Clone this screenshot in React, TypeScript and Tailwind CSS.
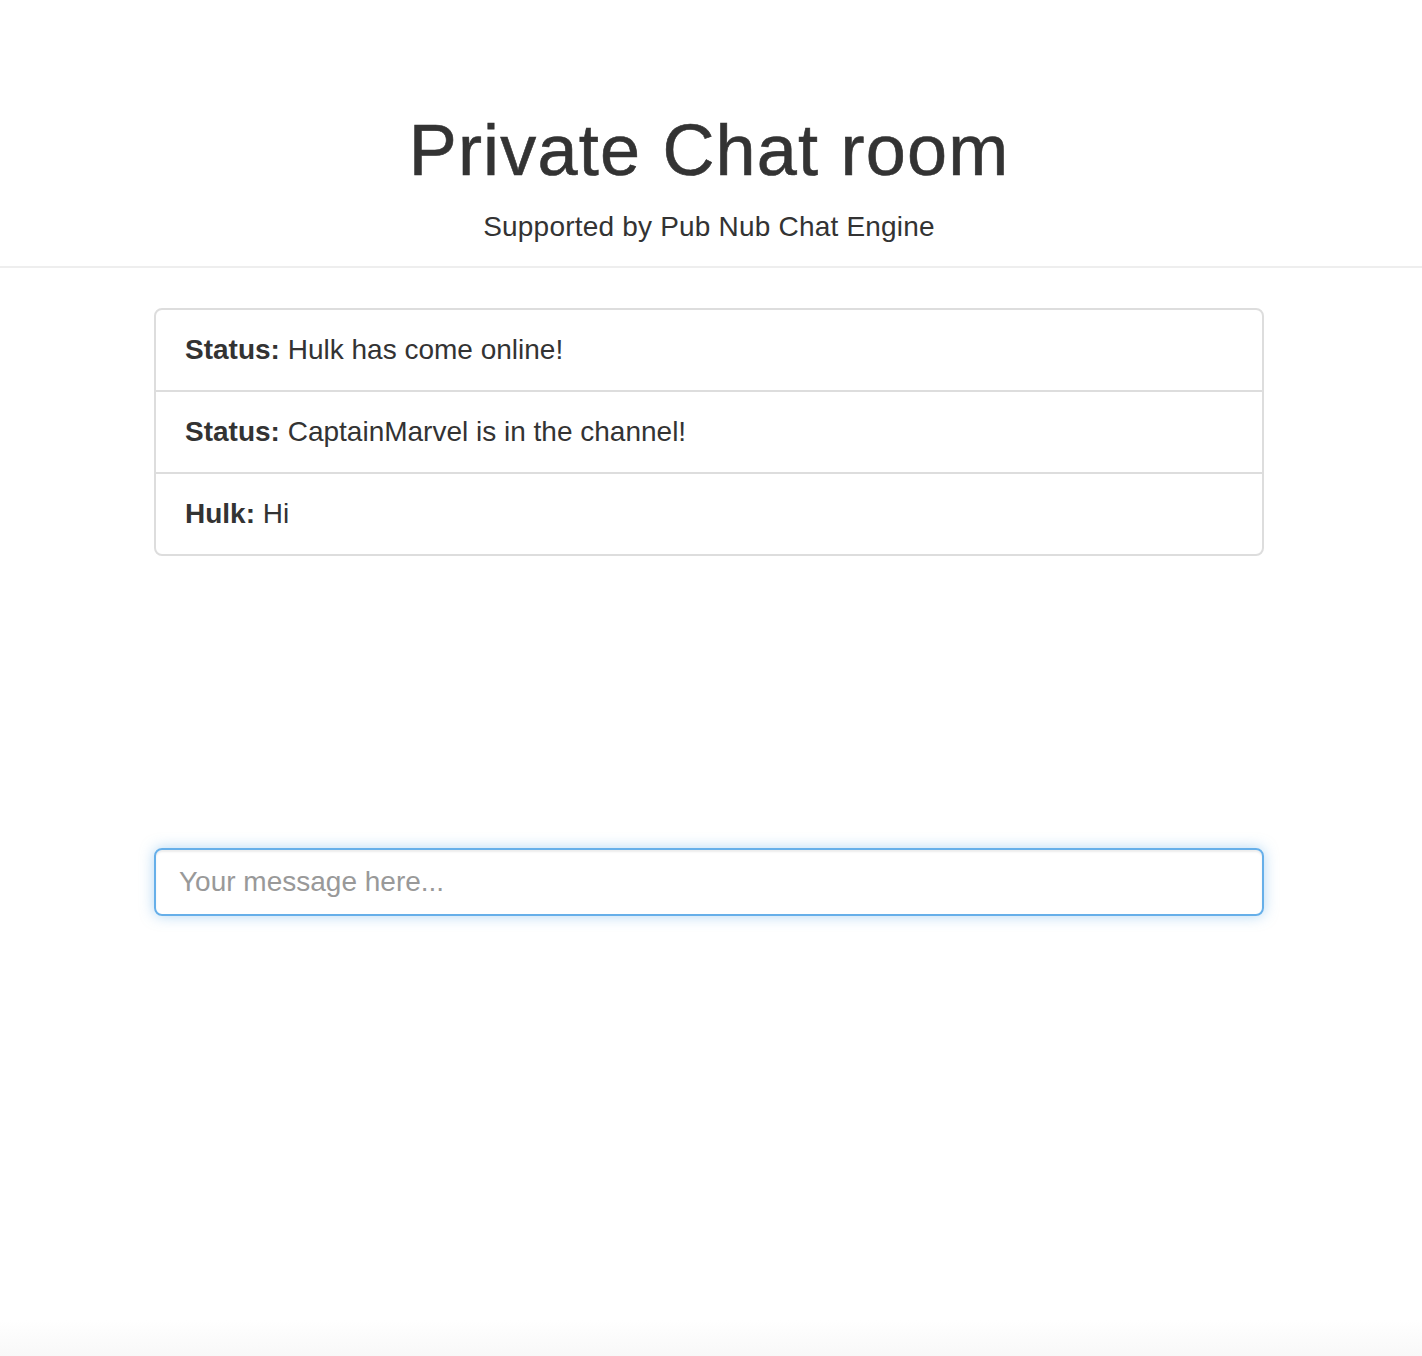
// App.tsx
const messages = [
  { who: "Status:", text: "Hulk has come online!" },
  { who: "Status:", text: "CaptainMarvel is in the channel!" },
  { who: "Hulk:", text: "Hi" },
];

export default function App() {
  return (
    <main
      className="min-h-[1356px] flex flex-col bg-white text-[#333]"
      style={{ fontFamily: '"Liberation Sans", Arial, Helvetica, sans-serif' }}
    >
      {/* Header */}
      <header className="pt-[111px] pb-[19px] pr-1 border-b-2 border-[#eee] text-center">
        <h1 className="text-[72px] leading-[79px] font-normal tracking-[1.2px] [-webkit-text-stroke:0.6px_#333]">
          Private Chat room
        </h1>
        <p className="mt-[17px] text-[28px] leading-[40px] tracking-[0.2px]">
          Supported by Pub Nub Chat Engine
        </p>
      </header>

      <div className="pr-1">
        <div className="mx-auto w-[1110px]">
          {/* Message list */}
          <ul className="mt-[40px] border-2 border-[#ddd] rounded-lg divide-y-2 divide-[#ddd]">
            {messages.map((m, i) => (
              <li key={i} className="px-[29px] py-[20px] text-[28px] leading-[40px]">
                <strong className="font-bold">{m.who}</strong> {m.text}
              </li>
            ))}
          </ul>

          {/* Message input */}
          <input
            type="text"
            placeholder="Your message here..."
            className="mt-[292px] block w-full h-[68px] px-[23px] border-2 border-[#66afe9] rounded-lg text-[28px] leading-[40px] text-[#555] placeholder:text-[#999] outline-none shadow-[inset_0_2px_2px_rgba(0,0,0,0.075),0_0_14px_rgba(102,175,233,0.5)]"
          />
        </div>
      </div>

      <div className="flex-1" />
      <div className="h-[36px] bg-gradient-to-b from-white to-[#f8f8f8]" />
    </main>
  );
}
